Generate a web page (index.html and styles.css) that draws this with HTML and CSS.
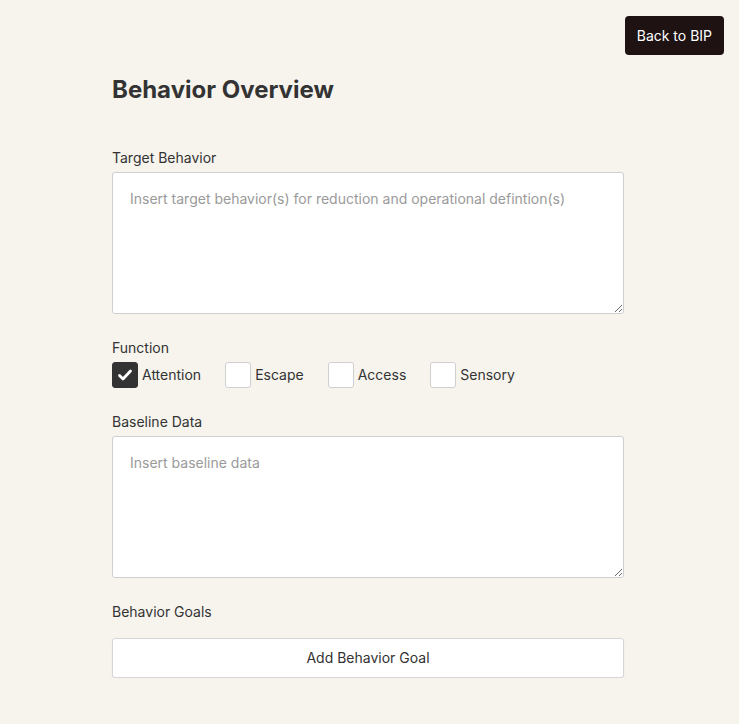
FILE: index.html
```html
<!DOCTYPE html>
<html>
<head>
<meta charset="utf-8">
<link rel="stylesheet" href="styles.css">
</head>
<body>
<header class="topbar">
  <button class="back-btn">Back to BIP</button>
</header>
<main class="content">
  <h1 class="title">Behavior Overview</h1>
  <div class="field first">
    <label class="label">Target Behavior</label>
    <textarea class="area" placeholder="Insert target behavior(s) for reduction and operational defintion(s)"></textarea>
  </div>
  <div class="field">
    <label class="label">Function</label>
    <div class="checks">
      <div class="check"><span class="box checked"><svg viewBox="0 0 26 26" width="26" height="26"><path d="M7.5 13.5l3.5 3.5 7.5-8" fill="none" stroke="#fff" stroke-width="2.8" stroke-linecap="round" stroke-linejoin="round"/></svg></span><span class="ctext">Attention</span></div>
      <div class="check"><span class="box"></span><span class="ctext">Escape</span></div>
      <div class="check"><span class="box"></span><span class="ctext">Access</span></div>
      <div class="check"><span class="box"></span><span class="ctext">Sensory</span></div>
    </div>
  </div>
  <div class="field">
    <label class="label">Baseline Data</label>
    <textarea class="area" placeholder="Insert baseline data"></textarea>
  </div>
  <div class="field">
    <label class="label">Behavior Goals</label>
    <button class="add-btn">Add Behavior Goal</button>
  </div>
</main>
</body>
</html>
```
FILE: styles.css
```css
html, body {
  margin: 0;
  padding: 0;
  background: #f7f4ee;
  font-family: Inter, "Noto Sans", sans-serif;
  color: #333;
}
.topbar {
  display: flex;
  justify-content: flex-end;
  padding: 16px 15px 0 0;
}
.back-btn {
  background: #1e1213;
  color: #fff;
  border: none;
  border-radius: 4px;
  height: 39px;
  padding: 0 12px;
  font-family: inherit;
  font-size: 14px;
}
.content {
  margin-left: 112px;
  width: 512px;
}
.title {
  margin: 20px 0 0 0;
  font-size: 24px;
  line-height: 29px;
  font-weight: 700;
  color: #333;
}
.field {
  display: flex;
  flex-direction: column;
  margin-top: 24px;
}
.field.first {
  margin-top: 44px;
}
.label {
  font-size: 14px;
  line-height: 20px;
  color: #333;
  margin-bottom: 4px;
}
.area {
  box-sizing: border-box;
  width: 512px;
  height: 142px;
  border: 1px solid #cfcfcf;
  border-radius: 3px;
  background: #fff;
  padding: 16px 17px;
  font-family: inherit;
  font-size: 14px;
  line-height: 20px;
  color: #333;
  resize: vertical;
}
.area::placeholder {
  color: #9a9a9a;
}
.checks {
  display: flex;
  gap: 24px;
  font-size: 14px;
  align-items: center;
}
.check {
  display: flex;
  align-items: center;
  gap: 4px;
}
.ctext {
  position: relative;
  top: -1px;
}
.box {
  box-sizing: border-box;
  width: 26px;
  height: 26px;
  border: 1px solid #cfcfcf;
  border-radius: 3px;
  background: #fff;
  display: flex;
}
.box.checked {
  background: #333;
  border-color: #333;
}
.box svg {
  margin: -1px;
}
.add-btn {
  margin-top: 12px;
  box-sizing: border-box;
  width: 512px;
  height: 40px;
  padding: 0 0 2px 0;
  background: #fff;
  border: 1px solid #d6d6d6;
  border-radius: 3px;
  box-shadow: 0 1px 2px rgba(0,0,0,0.06);
  font-family: inherit;
  font-size: 14px;
  color: #333;
}
```
